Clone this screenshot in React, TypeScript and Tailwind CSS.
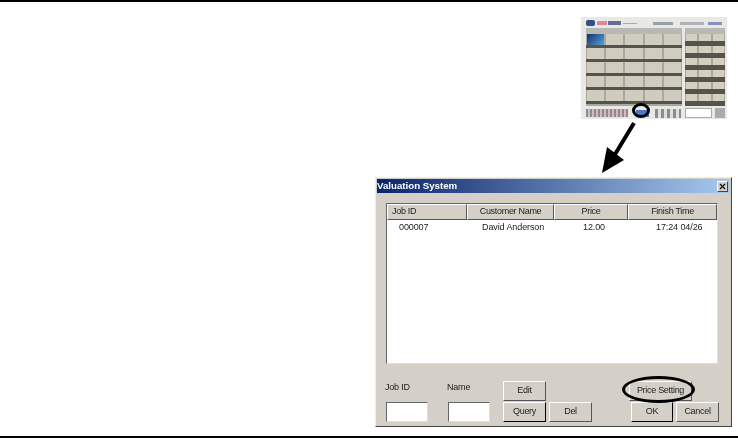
import { X } from "lucide-react";

const ui = { fontFamily: '"Liberation Sans", Arial, sans-serif' };

const raised =
  "border border-t-white border-l-white border-r-[#555] border-b-[#555] bg-[#d4d0c8]";

const Btn = ({ label, className = "" }: { label: string; className?: string }) => (
  <div
    className={`flex items-center justify-center h-[20px] text-[9px] tracking-[-0.3px] text-[#222] ${raised} ${className}`}
  >
    {label}
  </div>
);

const Field = ({ label, className = "" }: { label: string; className?: string }) => (
  <div className={`flex flex-col ${className}`}>
    <span className="text-[9px] tracking-[-0.2px] text-[#222] h-[21px] -ml-px leading-[13px]">{label}</span>
    <div className="w-[42px] h-[20px] bg-white border border-t-[#666] border-l-[#666] border-r-[#ddd] border-b-[#ddd]" />
  </div>
);

const Thumbnail = () => (
  <div className="relative ml-[206px] w-[146px] h-[102px] bg-[#e8e8e4] p-[2px] blur-[0.5px]">
    <div className="flex items-center h-[8px] gap-[1px] px-[3px]">
      <div className="w-[9px] h-[6px] bg-[#2f4f8a] rounded-[2px]" />
      <span className="ml-[1px] w-[10px] h-[4px] bg-[#d88a9a]" />
      <span className="w-[13px] h-[4px] bg-[#6a6a98]" />
      <span className="ml-[1px] w-[14px] h-[1px] bg-[#aaa]" />
      <div className="ml-auto w-[20px] h-[3px] bg-[#9aa0a8]" />
      <div className="ml-[6px] w-[24px] h-[3px] bg-[#b0b4b8]" />
      <div className="ml-[3px] w-[14px] h-[3px] bg-[#8a90b8]" />
    </div>
    <div className="flex gap-[3px] mt-[1px] ml-[3px]">
      <div className="w-[96px] bg-[#a8a8a2]">
        <div className="h-[6px] bg-[#b8b8b4]" />
        {[0, 1, 2, 3, 4].map((row) => (
          <div key={row}>
            <div className="grid grid-cols-5 gap-x-[2px] px-[1px]">
              {[0, 1, 2, 3, 4].map((col) =>
                row === 0 && col === 0 ? (
                  <div key={col} className="h-[11px] bg-[linear-gradient(135deg,#1d2f6a,#4aa3d8)]" />
                ) : (
                  <div key={col} className="h-[11px] bg-[#d0ccbf]" />
                ),
              )}
            </div>
            <div className="h-[3px] bg-[#55534a]" />
          </div>
        ))}
      </div>
      <div className="w-[40px] bg-[#a8a8a2]">
        <div className="h-[6px] bg-[#b8b8b4]" />
        {[0, 1, 2, 3, 4, 5].map((row) => (
          <div key={row}>
            <div className="grid grid-cols-3 gap-x-[2px] px-[1px]">
              {[0, 1, 2].map((col) => (
                <div key={col} className="h-[7px] bg-[#d4d0c0]" />
              ))}
            </div>
            <div className="h-[5px] bg-[#55534a]" />
          </div>
        ))}
      </div>
    </div>
    <div className="flex items-center mt-[1px] ml-[3px] h-[12px]">
      <div className="w-[42px] h-[8px] bg-[repeating-linear-gradient(90deg,#8a8a98_0,#8a8a98_2px,#d8b8b8_2px,#d8b8b8_4px)]" />
      <div className="ml-[8px] w-[13px] h-[7px] bg-[#4a7ac8]" />
      <div className="ml-[6px] w-[26px] h-[9px] bg-[repeating-linear-gradient(90deg,#8c8c8c_0,#8c8c8c_3px,#dedede_3px,#dedede_6px)]" />
      <div className="ml-[4px] w-[27px] h-[10px] bg-white border border-[#aaa]" />
      <div className="ml-[3px] w-[10px] h-[10px] bg-[#aaa]" />
    </div>
    <div className="absolute left-[51px] top-[86px] w-[18px] h-[15px] rounded-[50%] border-[3px] border-black" />
  </div>
);

const Arrow = () => (
  <svg className="block w-[357px] h-[58px]" viewBox="0 0 357 58" aria-hidden="true">
    <line x1="259" y1="4" x2="239" y2="37" stroke="#000" strokeWidth="4" />
    <polygon points="227,54 232,28 249,41" fill="#000" />
  </svg>
);

const Dialog = () => (
  <div className="relative w-[357px] h-[250px] bg-[#d4d0c8] p-[1px] border border-t-[#eee] border-l-[#eee] border-r-[#444] border-b-[#444]">
    <div className="flex items-center justify-between h-[14px] pr-[2px] bg-[linear-gradient(90deg,#0a246a,#a6caf0)]">
      <span className="text-[9.7px] font-bold text-white leading-none">Valuation System</span>
      <div className="flex items-center justify-center w-[11px] h-[11px] bg-[#d4d0c8] border border-t-white border-l-white border-r-[#444] border-b-[#444]">
        <X size={9} strokeWidth={3} color="#000" />
      </div>
    </div>
    <div className="ml-[9px] w-[332px] mt-[10px] h-[161px] bg-white border border-t-[#666] border-l-[#666] border-r-[#ddd] border-b-[#ddd]">
      <div className="grid grid-cols-[80px_87px_74px_89px] h-[15px] text-[9px] tracking-[-0.3px] text-[#222]">
        <div className={`flex items-center pl-[4px] ${raised}`}>Job ID</div>
        <div className={`flex items-center justify-center ${raised}`}>Customer Name</div>
        <div className={`flex items-center justify-center ${raised}`}>Price</div>
        <div className={`flex items-center justify-center ${raised}`}>Finish Time</div>
      </div>
      <div className="grid grid-cols-[80px_87px_74px_89px] mt-[1px] text-[9px] tracking-[-0.1px] text-[#222] leading-[14px]">
        <div className="pl-[12px]">000007</div>
        <div className="pl-[15px]">David Anderson</div>
        <div className="pl-[29px]">12.00</div>
        <div className="pl-[28px]">17:24 04/26</div>
      </div>
    </div>
    <div className="flex items-end mt-[17px] ml-[9px]">
      <Field label="Job ID" />
      <Field label="Name" className="ml-[20px]" />
      <div className="flex flex-col gap-[1px] ml-[13px]">
        <Btn label="Edit" className="w-[43px]" />
        <div className="flex gap-[3px]">
          <Btn label="Query" className="w-[43px] border-r-black border-b-black" />
          <Btn label="Del" className="w-[43px]" />
        </div>
      </div>
      <div className="flex flex-col gap-[1px] ml-[39px]">
        <Btn label="Price Setting" className="w-[63px] -ml-[2px]" />
        <div className="flex gap-[3px]">
          <Btn label="OK" className="w-[42px] border-r-black border-b-black" />
          <Btn label="Cancel" className="w-[43px]" />
        </div>
      </div>
    </div>
    <div className="absolute left-[246px] top-[198px] w-[73px] h-[27px] rounded-[50%] border-[3px] border-black" />
  </div>
);

export default function App() {
  return (
    <div
      className="w-[738px] h-[438px] bg-white border-t-2 border-b-2 border-black pl-[375px] pt-[15px] overflow-hidden blur-[0.2px]"
      style={ui}
    >
      <Thumbnail />
      <Arrow />
      <Dialog />
    </div>
  );
}
